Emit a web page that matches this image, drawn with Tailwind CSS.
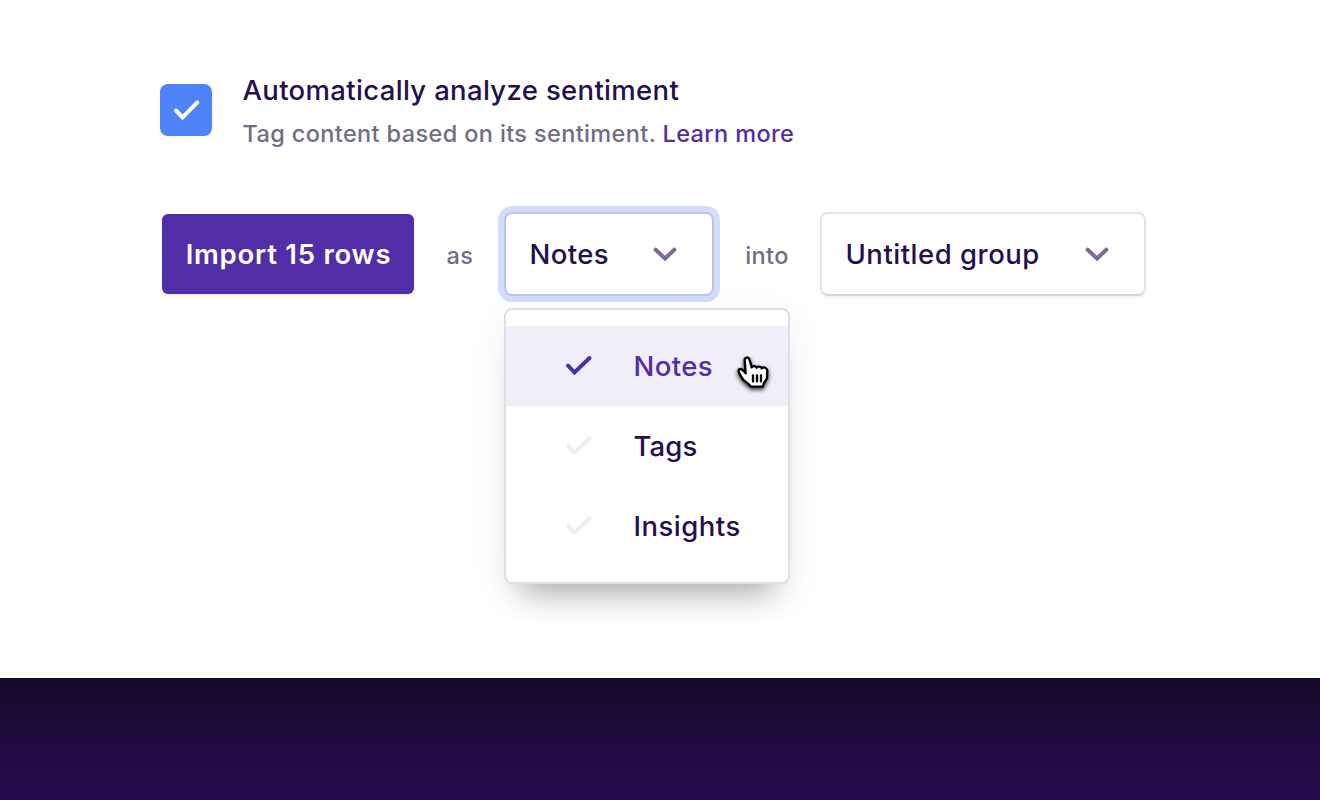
<!DOCTYPE html>
<html lang="en">
<head>
<meta charset="utf-8">
<title>Import</title>
<script src="https://cdn.jsdelivr.net/npm/@tailwindcss/browser@4"></script>
</head>
<body class="flex h-screen flex-col overflow-hidden bg-white font-['Inter','Noto_Sans',sans-serif] text-[27.5px] font-medium text-[#240f50]">
  <main class="h-[678px] shrink-0 pl-40 pt-[68px]">
    <label class="flex h-[88px] items-start">
      <span class="mt-4 flex size-[52px] items-center justify-center rounded-lg bg-[#4f83f9] shadow-[0_2px_4px_rgba(0,0,0,0.03)]">
        <svg class="size-[52px]" viewBox="0 0 52 52" fill="none" stroke="#fff" stroke-width="4" stroke-linecap="round" stroke-linejoin="miter"><path d="M16 26.5 22.5 33.3 37.3 18.3"/></svg>
      </span>
      <span class="ml-[30.5px] flex flex-col whitespace-nowrap leading-[44px]">
        <span class="leading-[44px] tracking-[0.33px]">Automatically analyze sentiment</span>
        <span class="text-[23.5px] font-[450] tracking-[0.37px] text-[#716d86]">Tag content based on its sentiment. <a class="font-medium text-[#512da8]">Learn more</a></span>
      </span>
    </label>

    <div class="mt-14 flex h-[84px] items-center whitespace-nowrap">
      <button class="ml-0.5 h-20 w-[252px] rounded-md bg-[#512da8] pl-px pt-0.5 font-semibold tracking-[0.75px] text-white shadow-[0_2px_4px_rgba(0,0,0,0.08)]">Import 15 rows</button>
      <span class="mt-[3px] w-[90px] pl-0.5 text-center text-[23.5px] font-[450] tracking-[0.4px] text-[#716d86]">as</span>
      <div class="relative h-[84px] w-[210px]">
        <button class="flex h-[84px] w-[210px] items-center justify-between rounded-lg border-2 border-[#bdc5e7] bg-white pl-[23.5px] pr-[35px] tracking-[0.4px] ring-6 ring-[#d3defd]">
          <span class="pt-0.5">Notes</span>
          <svg class="h-4 w-6" viewBox="0 0 24 16" fill="none" stroke="#7b6b95" stroke-width="4" stroke-linecap="round"><path d="M2.7 3.7 12 12.5 21.3 3.7"/></svg>
        </button>
        <ul class="absolute left-0 top-24 h-[276px] w-[286px] rounded-lg border-2 border-[#dfdee5] bg-white py-4 shadow-[0_28px_28px_-18px_rgba(0,0,0,0.28),0_10px_40px_rgba(0,0,0,0.06)]">
          <li class="flex h-20 items-center bg-[#f0eef8] pl-[58px] tracking-[0.4px] text-[#512da8]">
            <svg class="mr-[37.5px] size-8" viewBox="0 0 32 32" fill="none" stroke="#512da8" stroke-width="4" stroke-linecap="round"><path d="M4 15.5 10.5 22.5 25.5 8"/></svg><span class="pt-0.5">Notes</span>
          </li>
          <li class="flex h-20 items-center pl-[58px] tracking-[0.1px]">
            <svg class="mr-[37.5px] size-8" viewBox="0 0 32 32" fill="none" stroke="#efedf2" stroke-width="4" stroke-linecap="round"><path d="M4 15.5 10.5 22.5 25.5 8"/></svg><span class="pt-0.5">Tags</span>
          </li>
          <li class="flex h-20 items-center pl-[58px] tracking-[0.5px]">
            <svg class="mr-[37.5px] size-8" viewBox="0 0 32 32" fill="none" stroke="#efedf2" stroke-width="4" stroke-linecap="round"><path d="M4 15.5 10.5 22.5 25.5 8"/></svg><span class="pt-0.5">Insights</span>
          </li>
        </ul>
        <svg class="absolute left-[221px] top-[134px] size-[60px] drop-shadow-[0_2px_2px_rgba(0,0,0,0.8)]" viewBox="0 0 180 180" fill="#fff" stroke="#000" stroke-width="7" stroke-linejoin="round" stroke-linecap="round">
          <path d="M62 82 59 44C58 33 71 31 74 42L80 64C82 59 92 59 95 65 98 60 108 61 110 67 116 61 126 66 127 74L126 97 118 109 113 122H78L68 112 54 101 43 82C36 70 46 65 54 73Z"/>
          <path d="M84 88V106M96 88V106M108 88V106"/>
        </svg>
      </div>
      <span class="mt-[3px] w-[106px] text-center text-[23.5px] font-[450] tracking-[0.4px] text-[#716d86]">into</span>
      <button class="flex h-[84px] w-[326px] items-center justify-between rounded-lg border-2 border-[#e4e3e9] border-b-[#d5d4dc] bg-white pl-[23.5px] pr-[35px] tracking-[0.5px] shadow-[0_2px_4px_rgba(0,0,0,0.05)]">
        <span class="pt-0.5">Untitled group</span>
        <svg class="h-4 w-6" viewBox="0 0 24 16" fill="none" stroke="#7b6b95" stroke-width="4" stroke-linecap="round"><path d="M2.7 3.7 12 12.5 21.3 3.7"/></svg>
      </button>
    </div>
  </main>
  <footer class="grow bg-linear-to-b from-[#140829] from-0% via-[#1e0b3c] via-45% to-[#240d4c] to-100%"></footer>
</body>
</html>
